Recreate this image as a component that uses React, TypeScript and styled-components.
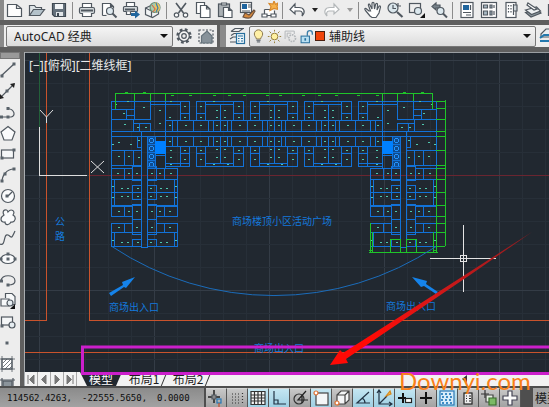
import React from "react";
import styled, { createGlobalStyle, css } from "styled-components";

const GlobalStyle = createGlobalStyle`
  *, *::before, *::after { box-sizing: border-box; }
  body {
    margin: 0;
    background: #5f5f5f;
    font-family: "Noto Sans", "Noto Sans CJK SC", sans-serif;
    font-size: 12px;
    color: #1c1c1c;
  }
  button, select { font: inherit; color: inherit; margin: 0; padding: 0; border: 0; background: none; }
`;

/* ---------- layout ---------- */

const Window = styled.div`
  position: relative;
  display: flex;
  flex-direction: column;
  height: 100vh;
  overflow: hidden;
  background: #5f5f5f;
`;

const Toolbar = styled.div`
  display: flex;
  align-items: center;
  flex: none;
  height: 20px;
  overflow: hidden;
  background: #ededed;
`;

const ToolbarRow = styled.div`
  display: flex;
  gap: 3px;
  flex: none;
  height: 22px;
  margin: 5px 0 5px;
  overflow: hidden;
`;

const Group = styled.div<{ $grow?: boolean }>`
  display: flex;
  align-items: center;
  flex: ${(p) => (p.$grow ? "1 0 auto" : "none")};
  background: #ededed;
`;

const Grip = styled.span<{ $wide?: boolean }>`
  flex: none;
  align-self: stretch;
  width: ${(p) => (p.$wide ? 6 : 4)}px;
  background: radial-gradient(circle, #8a8a8a 0 1px, transparent 1px) 0 0 / 2px 2px, #4a4a4a;
`;

const Divider = styled.span`
  flex: none;
  width: 1px;
  height: 17px;
  margin: 0 3px 0 2px;
  background: #8c8c8c;
`;

const ToolButton = styled.button<{ $narrow?: boolean }>`
  display: grid;
  place-items: center;
  flex: none;
  width: ${(p) => (p.$narrow ? 13 : 22)}px;
  height: 20px;
`;

const Combo = styled.label<{ $width: number; $lead?: boolean }>`
  position: relative;
  display: flex;
  align-items: center;
  flex: none;
  width: ${(p) => p.$width}px;
  height: 21px;
  margin-left: ${(p) => (p.$lead ? 2 : 1)}px;
  padding-left: ${(p) => (p.$lead ? 7 : 1)}px;
  border: 1px solid #777;
  border-radius: 2px;
  background: linear-gradient(#f5f5f5, #dcdcdc);
`;

const ComboSelect = styled.select`
  flex: 1;
  min-width: 0;
  height: 100%;
  appearance: none;
  outline: none;
`;

const ComboArrow = styled.span`
  flex: none;
  margin-right: 4px;
  border: 4px solid transparent;
  border-top-color: #111;
  border-bottom: 0;
`;

const LayerMarks = styled.span`
  display: flex;
  align-items: center;
  flex: none;
  gap: 1px;
  margin-right: 4px;

  svg { width: 15px; height: 15px; }
`;

const Swatch = styled.span`
  width: 10px;
  height: 10px;
  background: #f0440a;
  border: 1px solid #4a2010;
`;

const Workspace = styled.div`
  display: flex;
  flex: 1;
  min-height: 0;
`;

const DrawBar = styled.div`
  display: flex;
  flex-direction: column;
  flex: none;
  width: 20px;
  margin-right: 4px;
  overflow: hidden;
  background: #ededed;
`;

const DrawGrip = styled.span`
  flex: none;
  height: 7px;
  border: 1px solid #777;
  background: radial-gradient(circle, #9a9a9a 0 1px, transparent 1px) 0 0 / 2px 2px, #444;
`;

const DrawButton = styled.button`
  display: grid;
  place-items: center start;
  flex: none;
  width: 20px;
  height: 21px;
`;

const Document = styled.main`
  position: relative;
  display: flex;
  flex-direction: column;
  flex: 1;
  min-width: 0;
  border-left: 1px solid #a9adb0;
`;

const Canvas = styled.div`
  flex: 1;
  min-height: 0;
  overflow: hidden;
  background: #212830;
  border-top: 1px solid #9a9ea2;

  svg { display: block; }
`;

const MarkupLayer = styled.svg`
  position: absolute;
  left: 0;
  top: 0;
  overflow: visible;
  pointer-events: none;
`;

const TabStrip = styled.nav`
  display: flex;
  flex: none;
  height: 14px;
  background: #f2f2f2;
`;

const NavButton = styled.button`
  display: grid;
  place-items: center;
  width: 13px;
  height: 14px;
  border-right: 1px solid #a8a8a8;
`;

const ScrollButton = styled.button`
  display: grid;
  place-items: center;
  width: 16px;
  height: 14px;
  margin: 0 76px 0 auto;
`;

const Tab = styled.button<{ $active?: boolean }>`
  position: relative;
  width: ${(p) => (p.$active ? 42 : 44)}px;
  height: 14px;
  margin-left: ${(p) => (p.$active ? 3 : 0)}px;
  font-family: "Noto Sans CJK SC", sans-serif;
  font-size: 12px;
  line-height: 14px;
  text-align: center;
  z-index: 0;
  ${(p) =>
    p.$active
      ? css`
          color: #fff;
          &::before {
            content: "";
            position: absolute;
            inset: 0;
            z-index: -1;
            background: #212830;
            clip-path: polygon(0 0, 100% 0, 36px 100%, 7px 100%);
          }
        `
      : css`
          &::after {
            content: "";
            position: absolute;
            right: 2px;
            top: 3px;
            width: 1px;
            height: 11px;
            background: #333;
            transform: skewX(-22deg);
          }
        `}
`;

const StatusBar = styled.footer`
  display: flex;
  align-items: stretch;
  flex: none;
  height: 21px;
  padding-top: 2px;
  background: #4e4e4e;
`;

const Coordinates = styled.div`
  display: flex;
  align-items: center;
  gap: 10px;
  flex: none;
  width: 204px;
  margin-right: 2px;
  padding-left: 7px;
  font-family: "DejaVu Sans Mono", monospace;
  font-size: 9px;
  color: #0c0c0c;
  background: linear-gradient(#8b8b8b, #a2a2a2);
`;

const Toggle = styled.button<{ $on?: boolean }>`
  display: grid;
  place-items: center;
  flex: none;
  width: 21px;
  border-right: 1px solid #555;
  border-top: 1px solid #d5d5d5;
  background: ${(p) =>
    p.$on ? "linear-gradient(#c4e6f2, #9fcfe2)" : "linear-gradient(#c8c8c8, #a2a2a2)"};
`;

const SpaceButton = styled.button`
  flex: 1;
  min-width: 0;
  margin-left: 12px;
  padding-left: 2px;
  overflow: hidden;
  text-align: left;
  white-space: nowrap;
  background: #a6a6a6;
`;

const Watermark = styled.div`
  position: absolute;
  left: 399px;
  bottom: 12px;
  font-family: Lato, sans-serif;
  font-size: 24px;
  line-height: 28px;
  color: #fa8018;
  pointer-events: none;
`;

/* ---------- icons ---------- */

const Icon = ({ children }: { children: React.ReactNode }) => (
  <svg width="18" height="18" viewBox="0 0 18 18" fill="none" stroke="#505860" strokeWidth="1.2" aria-hidden="true">
    {children}
  </svg>
);

const down = <path d="M2 7h6l-3 4z" fill="#222" stroke="none" />;

const icons: Record<string, React.ReactNode> = {
  new: <path d="M1.5 3.5h9l5 4v8h-14z M10.5 3.5v4h5" fill="#fdfdfd" />,
  open: (
    <>
      <path d="M1.500 14.500V4.500h5l1.500 2h5.500v3" fill="#dfe5e8" />
      <path d="M1.500 14.500l4-6h11l-4.500 6z" fill="#b4c2ca" />
    </>
  ),
  save: (
    <>
      <path d="M2.500 2.500h13v13h-11l-2-2z" fill="#65717c" stroke="#3f4952" />
      <path d="M5 3h8v5H5z" fill="#f1f4f6" stroke="none" />
      <path d="M6 11h7v4H6z" fill="#e0e5e8" stroke="none" />
      <path d="M7 12h2v3H7z" fill="#3f4952" stroke="none" />
    </>
  ),
  print: (
    <>
      <path d="M4.500 7V2.500h9V7" fill="#fff" />
      <rect x="1.500" y="6.500" width="15" height="6" rx="1.500" fill="#d4d9dc" />
      <path d="M3 9.500h12" strokeWidth="2" />
      <path d="M4.500 12v3.500h9V12" fill="#fff" />
    </>
  ),
  preview: (
    <>
      <path d="M2.500 14.500v-12h8l3 3v2 M10.500 2.500v3h3 M2.500 14.500h4" fill="#fff" />
      <circle cx="10" cy="10" r="3.500" fill="#dfeaf0" />
      <path d="M12.500 12.500l4 4" strokeWidth="2" />
    </>
  ),
  publish: (
    <>
      <path d="M4.500 6V1.500h8V6" fill="#fff" />
      <rect x="1.500" y="5.500" width="14" height="5" rx="1" fill="#d4d9dc" />
      <path d="M3 8.500h10" strokeWidth="2" />
      <path d="M4.500 10.500v3h4v-3" fill="#fff" />
      <path d="M9 12h4V9.500l5 4-5 4V15H9z" fill="#20659d" stroke="none" />
    </>
  ),
  globe: (
    <>
      <path d="M1.500 7l7-3 6 3v6l-6 3.500-7-3z" fill="#f1f3f4" />
      <path d="M1.500 7l6 3v6" />
      <circle cx="11" cy="6.500" r="5" fill="#a5cfae" stroke="#6b8b78" />
      <path d="M11 1.500v10a5 5 0 0 0 0-10z" fill="#edc45c" stroke="none" />
      <path d="M8 4l3 4-2 3" stroke="#d76c48" />
      <path d="M12 2l2 5-2 4" stroke="#387fb0" />
    </>
  ),
  cut: (
    <>
      <path d="M4 2l7.500 10 M14 2L6.500 12" strokeWidth="1.600" />
      <circle cx="4.500" cy="14" r="2.200" fill="#fff" />
      <circle cx="13.500" cy="14" r="2.200" fill="#fff" />
    </>
  ),
  copy: (
    <>
      <path d="M2.500 12.500v-11h8v11z" fill="#fff" />
      <path d="M6.500 4.500h6l3.500 3.500v8.500H6.500z M12.500 4.500V8H16" fill="#fff" />
    </>
  ),
  paste: (
    <>
      <rect x="2.500" y="3" width="11" height="12.500" fill="#aab0b4" />
      <path d="M5.500 4V2h5v2z" fill="#e9ecee" />
      <path d="M7.500 6.500h5l3.500 3v7H7.500z M12.500 6.500v3H16" fill="#fff" />
    </>
  ),
  match: (
    <>
      <rect x="2.500" y="1.500" width="11" height="10" fill="#fff" />
      <path d="M4 3h5v5H4z" fill="#1f649e" stroke="none" />
      <path d="M10 4h3 M10 6h3 M4 10h8" />
      <path d="M16 9l-5 5-4-2-2 4c5 2 8 1 9-1l3-5z" fill="#d7893c" stroke="#6a5140" />
    </>
  ),
  block: (
    <>
      <path d="M4.500 8.500v6h10v-5 M4.500 8.500h6" fill="#fff" />
      <path d="M2 13h5v3H2z M11 13h5v3h-5z" fill="#fff" />
      <path d="M14 0l1.500 3.500L18 2l-1 3.500 1 3-4-1-4 2 1-4-2-3 4 .5z" fill="#f7b24b" stroke="#d8892c" />
    </>
  ),
  undo: <path d="M7 3L2 8.500 7 13v-3h5c2 0 3 2 2 5 4-4 2-8.500-3-8.500H7z" fill="#fff" />,
  redo: <path d="M11 3l5 5.500-5 4.500v-3H6c-2 0-3 2-2 5-4-4-2-8.500 3-8.500h4z" fill="#fff" stroke="#b4b8ba" />,
  hand: (
    <path
      d="M5 10L2 7.500c-1.500-.5-1.500 1-.5 2L6 15l2 1.500h4L15 12l1.500-6c0-1.500-1.500-1.500-2 0L13 9l.5-5.500c0-1.500-1.500-1.500-2 0L10.500 8 10 2.500c0-1.500-2-1.500-2 0V8L6 4C5.500 2.500 4 3 4.500 4.500L6.500 10z"
      fill="#fff"
    />
  ),
  zoom: (
    <>
      <circle cx="7" cy="7" r="5" fill="#dae6ec" />
      <path d="M11 11l5.500 5" strokeWidth="2.200" />
      <path d="M7 4v3.500h3 M12 2v3h3" />
    </>
  ),
  zoomWindow: (
    <>
      <rect x="1.500" y="2.500" width="11" height="9" />
      <circle cx="10" cy="10" r="3.500" fill="#dce8ee" />
      <path d="M17 12v5h-5z" fill="#111" stroke="none" />
    </>
  ),
  zoomPrev: (
    <>
      <path d="M6 2L2 5.500 6 9V7h4V4H6z" fill="#78838b" />
      <circle cx="10.500" cy="10" r="3.500" fill="#dce8ee" />
      <path d="M13 12.500l4 4" strokeWidth="2" />
    </>
  ),
  props: (
    <>
      <rect x="3" y="1.500" width="12" height="15" fill="#fff" />
      <path d="M5 4h6v5H5z" fill="#20659d" stroke="none" />
      <path d="M12.500 4v5 M5 11.500h8 M8 14h5" />
    </>
  ),
  design: (
    <>
      <rect x="1.500" y="1.500" width="15" height="15" fill="#fff" />
      <path d="M3.500 4h4v3h-4z M3.500 10h4v4h-4z M10 4h2v3h-2z M14 4v3 M10 10h2v4h-2z M14 10v4" fill="#a9bac5" />
    </>
  ),
  palettes: (
    <>
      <rect x="4" y="1.500" width="10" height="15" fill="#fff" />
      <path d="M6.500 4v1.500 M9 4v1.500 M6.500 7v1.500 M9 7v1.500 M6.500 10v1.500 M9 10v1.500 M11.500 3v11" />
      <path d="M12 4h3v6h-3" fill="#cdd4d8" />
    </>
  ),
  sheets: (
    <>
      <path d="M1.500 11.500L13 8l4 4-10 4z" fill="#8d999f" />
      <path d="M1.500 9l11-3 4 4-9 3.500z" fill="#eef1f3" />
      <path d="M4 2l9 6-3 1-7-5z" fill="#fff" />
    </>
  ),
  markup: <path d="M2.500 3.500h12v11h-12z M5 6h6 M5 9h6" fill="#fff" />,
  gear: (
    <>
      <circle cx="9" cy="9" r="6.200" strokeWidth="3" strokeDasharray="2.600 2.270" />
      <circle cx="9" cy="9" r="5.300" fill="#f6f6f6" />
      <circle cx="9" cy="9" r="2.300" fill="#ededed" />
    </>
  ),
  workspace: (
    <>
      <rect x="2" y="3" width="14" height="13" strokeDasharray="2 1.500" />
      <path d="M4.500 16V9L10 4l5 5v7z" fill="#87929a" stroke="#65727b" />
    </>
  ),
  layers: (
    <>
      <path d="M3 4.500l4-3h9 M3 8.500l3-2h5 M2 12l3-2h3 M3 4.500h8l4-3 M2 15h6" />
      <rect x="8.500" y="6.500" width="8" height="10" fill="#eef6fa" stroke="#276f9d" />
      <path d="M10 9h5 M10 11.500h1.500 M13 11.500h2 M10 14h1.500 M13 14h2" stroke="#276f9d" />
    </>
  ),
  layerMore: (
    <>
      <path d="M3 7l5-5h9v4l-4 4H3z" fill="#e9eef1" />
      <path d="M2 11l4-3h11 M2 14h14" stroke="#2478ad" strokeWidth="2" />
    </>
  ),
  bulb: (
    <>
      <path d="M6.500 12c0-2-2.500-3-2.500-6a5 5 0 0 1 10 0c0 3-2.500 4-2.500 6z" fill="#fff0a6" stroke="#8c7950" />
      <path d="M6.500 13.500h5 M7 15.500h4" />
    </>
  ),
  sun: (
    <>
      <circle cx="9" cy="9" r="4" fill="#fff1a0" stroke="#9a8440" />
      <path d="M9 1v2 M9 15v2 M1 9h2 M15 9h2 M3 3l2 2 M13 13l2 2 M3 15l2-2 M13 5l2-2" stroke="#9a8440" />
    </>
  ),
  freeze: (
    <>
      <path d="M2.500 12V2.500h11V6 M5 10V5h5" stroke="#b3b7ba" />
      <circle cx="11" cy="11" r="4" stroke="#b3b7ba" strokeWidth="2" strokeDasharray="2 1" />
    </>
  ),
  lock: (
    <>
      <path d="M10 8V5a3 3 0 0 1 6 0v2" stroke="#3c7fa9" strokeWidth="1.600" />
      <rect x="2.500" y="8.500" width="10" height="8" fill="#b9e0f2" stroke="#276f9d" />
      <path d="M7.500 11v3" stroke="#276f9d" strokeWidth="2" />
    </>
  ),
};

const Node = ({ at }: { at: [number, number][] }) => (
  <>
    {at.map(([x, y], i) => (
      <rect key={i} x={x - 1.5} y={y - 1.5} width="3" height="3" fill="#59626a" stroke="none" />
    ))}
  </>
);

const drawTools: [string, React.ReactNode][] = [
  ["直线", <><path d="M1 15L14 3" /><Node at={[[2, 15], [14, 3]]} /></>],
  ["构造线", <><path d="M0 16L14 2" /><path d="M15 1l-5 1 4 4z M0 17l0-5 4 4z" fill="#222" stroke="none" /><Node at={[[7, 9]]} /></>],
  ["多段线", <><path d="M1 14h10c5-1 4-8-4-8.500" /><Node at={[[1.5, 14], [8, 14], [8, 5.5]]} /></>],
  ["多边形", <path d="M8 2.500l7 5.500-3 8H4L1 8z" fill="#fafbfc" />],
  ["矩形", <><rect x="1.500" y="5" width="12" height="8" fill="#f5f7f8" /><Node at={[[14, 5], [2, 13]]} /></>],
  ["圆弧", <><path d="M2 16C2 9 7 3 14 3" /><Node at={[[2, 15], [5, 8], [14, 3]]} /></>],
  ["圆", <><circle cx="8" cy="9" r="6.500" fill="#fafbfc" /><path d="M8 9l4-4" /><Node at={[[7, 9]]} /></>],
  ["修订云线", <path d="M4 7C1 2 7 0 8 4c3-4 8-1 5 3 4 2 2 8-2 7-2 4-6 3-6 0-4 1-6-4-1-7z" fill="#fafbfc" />],
  ["样条曲线", <path d="M0 15c6 3 3-11 8-9 4 2 3 5 7-4" />],
  ["椭圆", <><ellipse cx="8" cy="9" rx="7" ry="4.500" fill="#fafbfc" /><Node at={[[8, 9], [1, 9], [15, 9], [8, 4]]} /></>],
  ["椭圆弧", <><path d="M1 10c0-7 14-7 14 0 0 3-3 4-7 4" /><Node at={[[1.5, 10], [8, 14]]} /></>],
  ["插入块", <><path d="M5.500 6V1.500H12l3 3v8H9 M1 7h8v7H1z" fill="#f7f9fa" /><circle cx="10" cy="11" r="3" fill="#e6edf1" /><path d="M15 12v5h-5z" fill="#111" stroke="none" /></>],
  ["创建块", <><rect x="1.500" y="4" width="11" height="8" fill="#f5f7f8" /><circle cx="12" cy="12" r="3" fill="#e6edf1" /><Node at={[[2, 13]]} /></>],
  ["点", <Node at={[[7, 9]]} />],
  ["图案填充", <><rect x="2" y="4" width="10" height="10" fill="#fff" /><path d="M0 4h15 M0 14h15 M2 1v16 M12 1v16 M3 8l4-4 M3 12l8-8 M5 14l7-7 M9 14l3-3" strokeWidth="0.800" /></>],
  ["渐变色", <><path d="M0 4h15 M2 2v16 M13 2v16" /><rect x="3" y="5" width="9" height="12" fill="#8b949b" /></>],
];

/* ---------- drawing ---------- */

type Box = [number, number, number, number];

const trace = (boxes: Box[], dx = 0) =>
  boxes
    .map(([l, t, r, b]) => {
      const x1 = l + dx + 0.5;
      const x2 = r + dx + 0.5;
      return `M${x1} ${t + 0.5}H${x2}V${b + 0.5}H${x1}Z`;
    })
    .join("");

const unit: Box[] = [
  [0, 101, 9, 113], [0, 113, 9, 120], [37, 101, 47, 113], [37, 113, 47, 120],
  [0, 101, 47, 101], [9, 104, 37, 120], [24, 104, 24, 120],
  [17, 120, 24, 131], [24, 120, 31, 131], [-19, 120, -3, 131], [-3, 120, 12, 131],
  [17, 136, 24, 146], [24, 136, 31, 146], [-19, 136, -3, 146], [-3, 136, 12, 146],
  [0, 146, 9, 153], [0, 153, 9, 166], [37, 146, 47, 153], [37, 153, 47, 166],
  [9, 163, 37, 166], [24, 146, 24, 163], [9, 146, 37, 163],
];

const unitDots: [number, number][] = [
  [4, 106], [4, 117], [20, 110], [28, 110], [20, 117], [28, 117], [42, 106], [42, 117],
  [20, 125], [28, 125], [-11, 125], [4, 125], [-11, 141], [4, 141], [20, 141], [28, 141],
  [20, 149], [28, 149], [4, 150], [42, 150], [4, 159], [42, 159], [20, 157], [28, 157],
  [17, 101], [31, 164], [17, 164],
];

const corner: Box[] = [
  [111, 101, 189, 101], [111, 101, 134, 109], [111, 109, 126, 119], [126, 115, 134, 119],
  [134, 101, 150, 119], [111, 119, 133, 131], [133, 123, 139, 131], [139, 123, 150, 131],
  [150, 104, 165, 104], [165, 101, 165, 168], [180, 101, 189, 113], [180, 113, 189, 120],
  [165, 104, 180, 120], [165, 120, 172, 131], [165, 136, 172, 146], [180, 146, 189, 153],
  [180, 153, 189, 166], [165, 146, 180, 163], [165, 163, 189, 166],
  [111, 136, 141, 150], [137, 136, 141, 147], [111, 150, 124, 165], [124, 150, 133, 165],
  [133, 150, 141, 165], [111, 131, 111, 168], [147, 136, 155, 144], [147, 144, 155, 152],
  [147, 152, 155, 160], [147, 160, 155, 168], [155, 155, 165, 155],
];

const wing: Box[] = [
  [111, 168, 124, 179], [124, 168, 132, 179], [132, 166, 141, 180],
  [111, 179, 114, 192], [111, 192, 114, 205], [114, 179, 141, 192], [114, 192, 141, 205],
  [132, 185, 141, 192], [132, 192, 141, 199],
  [111, 206, 124, 216], [124, 206, 132, 216], [132, 204, 141, 219], [132, 219, 141, 234],
  [111, 223, 124, 232], [124, 223, 132, 232], [111, 232, 114, 246], [114, 232, 141, 246],
  [132, 239, 141, 246],
];

const cornerDots: [number, number][] = [
  [115, 104], [123, 113], [143, 107], [159, 110], [159, 123], [124, 124], [137, 127], [145, 127],
  [118, 142], [130, 144], [138, 140], [118, 156], [128, 156], [138, 157], [112, 144], [127, 101],
  [169, 117], [169, 125], [169, 141], [170, 150], [170, 157], [170, 164], [170, 101], [184, 106],
  [184, 117], [184, 150], [184, 159],
];

const wingDots: [number, number][] = [
  [117, 173], [128, 173], [136, 173], [121, 188], [127, 188], [137, 188], [121, 196], [127, 196], [137, 196],
  [118, 211], [128, 211], [136, 211], [118, 227], [136, 227], [121, 242], [127, 242], [137, 242],
  [112, 186], [112, 197], [112, 240],
];

const Dots = ({ at, dx = 0 }: { at: [number, number][]; dx?: number }) => (
  <path d={at.map(([x, y]) => `M${x + dx} ${y + 0.5}h2`).join("")} stroke="#4fc7ae" />
);

const HalfPlan = () => (
  <>
    <path d={trace(corner)} />
    <path d="M141.500 131V247H147.500V136" />
    <path d={trace(wing)} />
    <rect x="155" y="141" width="11" height="13" fill="#0080ff" stroke="none" />
    {[140, 148, 156, 164].map((y) => (
      <g key={y}>
        <rect x="148" y={y - 3} width="7" height="7" fill="#0f4c90" stroke="none" />
        <circle cx="151.500" cy={y + 0.5} r="2" stroke="#2394ff" />
      </g>
    ))}
    <Dots at={cornerDots} />
    <Dots at={wingDots} />
    <g transform="translate(289 0) scale(-1 1)">
      <path d={trace(wing)} />
      <Dots at={wingDots} />
    </g>
  </>
);

const greenRungs = [101, 108, 119, 131, 136, 150, 165, 168, 179, 192, 205, 216, 223, 232, 246];
const minorX = Array.from({ length: 23 }, (_, i) => 39.5 + i * 23);
const minorY = Array.from({ length: 14 }, (_, i) => 60.5 + i * 23);

const SiteLabel = styled.text`
  font-family: "Noto Sans CJK SC", sans-serif;
  font-size: 10px;
  fill: #1479dc;
  stroke: none;
`;

const ViewLabel = styled.text`
  font-family: "Noto Sans", "Noto Sans CJK SC", sans-serif;
  font-size: 12px;
  fill: #e8e8e8;
`;

const Plan = () => (
  <svg width="524" height="320" viewBox="25 53 524 320" fill="none" role="img" aria-label="平面图">
    <g shapeRendering="crispEdges">
      {minorX.map((x, i) => (
        <path key={x} d={`M${x} 52V374`} stroke={i % 5 === 0 ? "#343c46" : "#272f38"} />
      ))}
      {minorY.map((y, i) => (
        <path key={y} d={`M25 ${y}H549`} stroke={i % 5 === 0 ? "#343c46" : "#272f38"} />
      ))}
      <path d="M90 175.500H549" stroke="#6a2530" />
      <path d="M39.500 52V127" stroke="#23603a" />
      <path d="M46.500 52V320.500H25 M549 320.500H89.500V52 M25 352.500H549" stroke="#c9532c" />
      <g stroke="#1272d8">
        <path d="M111 131.500H437 M111 136.500H437" />
        <HalfPlan />
        <g transform="translate(548 0) scale(-1 1)">
          <HalfPlan />
        </g>
        {[196, 250, 304].map((x) => (
          <React.Fragment key={x}>
            <path d={trace(unit, x)} />
            <Dots at={unitDots} dx={x} />
          </React.Fragment>
        ))}
        <path d={trace([[339, 120, 355, 131], [355, 120, 370, 131], [339, 136, 355, 146], [355, 136, 370, 146]])} />
        <Dots at={[[347, 125], [362, 125], [347, 141], [362, 141]]} />
      </g>
      <g stroke="#1fc42a">
        <path d="M115.500 109V93.500H432.500V109 M134.500 93V101 M150.500 93V101 M165.500 93V101 M382.500 93V101 M397.500 93V101 M413.500 93V101" />
        <path d="M125 92.500h3 M143 92.500h3 M171 95.500h3 M189 95.500h3 M213 95.500h3 M228 95.500h3 M243 95.500h3 M266 95.500h3 M279 95.500h3 M302 95.500h3 M318 95.500h3 M335 95.500h3 M357 95.500h3 M376 95.500h3 M403 92.500h3 M421 92.500h3" />
        <path d="M445.500 100V246 M436.500 168V252" />
        <path d={greenRungs.map((y) => `M436 ${y + 0.5}h9`).join("")} />
        <path d="M370.500 223V252 M372.500 232V252 M390.500 252V239.500H400.500V252 M406.500 252V239.500H416.500V252 M433.500 232V252 M369 252.500H438 M369 250.500H373 M433 250.500H437" />
      </g>
    </g>
    <path d="M112 246.500A292 292 0 0 0 436 246.500" stroke="#1b6cba" />
    <path d="M109 293l14-8-1-3 13-5-9 11-2-1-13 9z" fill="#1583ea" />
    <path d="M438 292l-12-8 1-3-15-4 9 10 3-1 12 8z" fill="#1583ea" />
    <g textAnchor="middle">
      <SiteLabel x="60" y="225">公</SiteLabel>
      <SiteLabel x="60" y="240">路</SiteLabel>
      <SiteLabel x="282" y="225">商场楼顶小区活动广场</SiteLabel>
      <SiteLabel x="134" y="311">商场出入口</SiteLabel>
      <SiteLabel x="411" y="310">商场出入口</SiteLabel>
      <SiteLabel x="279" y="352">商场出入口</SiteLabel>
    </g>
    <path d="M39.500 127V175.500H87" stroke="#dedede" shapeRendering="crispEdges" />
    <path d="M40 110l6.500 7 6.500-7 M46.500 117v6 M91 161l13 12 M104 161l-13 12" stroke="#dedede" />
    <ViewLabel x="29" y="70">[−][俯视][二维线框]</ViewLabel>
    <g stroke="#e4e4e4" shapeRendering="crispEdges">
      <path d="M463.500 225V292 M430 258.500H496" />
      <rect x="460.500" y="255.500" width="6" height="6" />
    </g>
  </svg>
);

const Markup = () => (
  <MarkupLayer width="524" height="335" viewBox="25 52 524 335" fill="none" aria-hidden="true">
    <defs>
      <linearGradient id="pointer" x1="1" y1="0" x2="0" y2="1">
        <stop offset="0" stopColor="#8c1c20" />
        <stop offset="0.500" stopColor="#d81818" />
        <stop offset="0.800" stopColor="#ff0a05" />
      </linearGradient>
    </defs>
    <path d="M560 347H82.500V373.500H560" stroke="#cb1fcb" strokeWidth="3" />
    <path d="M532 232L343 353 340 350 330 365 348 363 346 359 470 275z" fill="url(#pointer)" />
  </MarkupLayer>
);

/* ---------- toolbars ---------- */

type Tool = [string, string] | null;

const fileTools: Tool[] = [
  ["新建", "new"], ["打开", "open"], ["保存", "save"], null,
  ["打印", "print"], ["打印预览", "preview"], ["发布", "publish"], ["三维打印", "globe"], null,
  ["剪切", "cut"], ["复制", "copy"], ["粘贴", "paste"], ["特性匹配", "match"], ["块编辑器", "block"], null,
];

const viewTools: Tool[] = [
  null, ["平移", "hand"], ["实时缩放", "zoom"], ["窗口缩放", "zoomWindow"], ["缩放上一个", "zoomPrev"], null,
  ["特性", "props"], ["设计中心", "design"], ["工具选项板", "palettes"], ["图纸集", "sheets"], ["标记集", "markup"],
];

const Tools = ({ list }: { list: Tool[] }) => (
  <>
    {list.map((tool, i) =>
      tool ? (
        <ToolButton key={i} aria-label={tool[0]}>
          <Icon>{icons[tool[1]]}</Icon>
        </ToolButton>
      ) : (
        <Divider key={i} />
      )
    )}
  </>
);

const SmallArrow = ({ label, dim }: { label: string; dim?: boolean }) => (
  <ToolButton $narrow aria-label={label}>
    <svg width="10" height="18" opacity={dim ? 0.4 : 1}>{down}</svg>
  </ToolButton>
);

const toggles: [string, boolean, React.ReactNode][] = [
  ["推断约束", false, <><path d="M7 1v13 M1 8h12" stroke="#222" strokeWidth="1.500" /><path d="M5 6h4v4H5z" fill="#888" /><rect x="10" y="10" width="4" height="4" stroke="#2777b5" /><path d="M12 14v4" stroke="#c0502c" /></>],
  ["捕捉模式", false, <path d="M4 5h9 M4 8h9 M4 11h9 M4 14h9 M14.500 4v11" stroke="#333" strokeDasharray="1 2" />],
  ["栅格显示", true, <path d="M2 2.500h14v13H2z M2 6h14 M2 9h14 M2 12h14 M5.500 2v13 M9 2v13 M12.500 2v13" stroke="#333" fill="#f4f4f4" />],
  ["正交模式", true, <path d="M4 2v13h12 M4 11h4v4" stroke="#234" />],
  ["极轴追踪", false, <><circle cx="8" cy="10" r="5" stroke="#333" /><path d="M15 2L7 11h10 M11 6v8" stroke="#222" /></>],
  ["对象捕捉", true, <><rect x="4" y="4" width="12" height="12" fill="#f4f6f7" stroke="#444" /><circle cx="4" cy="4" r="2" fill="#fff" stroke="#e07030" /></>],
  ["三维对象捕捉", false, <><path d="M4 6l4-4h8v9l-4 4H4z M4 6h8v9 M12 6l4-4" fill="#f4f6f7" stroke="#444" /><circle cx="4" cy="14" r="2" fill="#fff" stroke="#e07030" /></>],
  ["对象捕捉追踪", true, <path d="M15 3L3 14h13 M8 9c2 1 3 3 3 5" stroke="#234" />],
  ["动态 UCS", true, <><path d="M4 2v13h12 M4 15L12 7 M2 4l2-3 2 3 M14 13l3 2-3 2" stroke="#234" /><path d="M15 2l-4 5 5-2z" fill="#f4b63c" stroke="#d48920" /></>],
  ["动态输入", true, <><path d="M7 4v10 M2 9h8" stroke="#111" strokeWidth="2" /><rect x="9.500" y="9.500" width="6" height="4" fill="#fff" stroke="#222" /></>],
  ["线宽", false, <path d="M9 3v12 M3 9h12" stroke="#111" strokeWidth="2" />],
  ["透明度", true, <><rect x="2" y="2" width="14" height="14" fill="#d6ecfa" stroke="#2b78b4" /><path d="M3 5h12 M4 8h12 M3 11h12 M4 14h12" stroke="#3e8cc5" strokeWidth="2" strokeDasharray="2 2" /></>],
  ["快捷特性", false, <><rect x="5" y="4" width="8" height="11" fill="#eee" stroke="#222" /><path d="M7 7h1 M10 7h2 M7 9.500h1 M10 9.500h2 M7 12h1 M10 12h2" stroke="#222" /></>],
  ["选择循环", false, <><path d="M5 1v8 M1 5h8" stroke="#333" /><path d="M6 6h7v7H6z" fill="#e6efe3" stroke="#444" /><path d="M9 9h7v7H9z" fill="#7bb965" stroke="#3b6e2c" /></>],
  ["注释监视器", false, <path d="M7 2h4v5h5v4h-5v5H7v-5H2V7h5z" fill="#fafafa" stroke="#445" />],
];

const pagers: [string, string][] = [
  ["第一个布局", "M3 2v9 M9 2L4.500 6.500 9 11z"],
  ["上一个布局", "M8 2L3.500 6.500 8 11z"],
  ["下一个布局", "M4 2l4.500 4.500L4 11z"],
  ["最后一个布局", "M9 2v9 M3 2l4.500 4.500L3 11z"],
];

export default function App() {
  return (
    <Window>
      <GlobalStyle />
      <Toolbar>
        <Grip />
        <Tools list={fileTools} />
        <ToolButton aria-label="放弃"><Icon>{icons.undo}</Icon></ToolButton>
        <SmallArrow label="放弃列表" />
        <ToolButton aria-label="重做"><Icon>{icons.redo}</Icon></ToolButton>
        <SmallArrow label="重做列表" dim />
        <Tools list={viewTools} />
      </Toolbar>
      <ToolbarRow>
        <Group>
          <Grip />
          <Combo $width={167} $lead>
            <ComboSelect aria-label="工作空间">
              <option>AutoCAD 经典</option>
            </ComboSelect>
            <ComboArrow />
          </Combo>
          <Tools list={[["工作空间设置", "gear"], ["我的工作空间", "workspace"]]} />
        </Group>
        <Group $grow>
          <Grip $wide />
          <Tools list={[["图层特性", "layers"]]} />
          <Combo $width={287}>
            <LayerMarks>
              {["bulb", "sun", "freeze", "lock"].map((name) => (
                <Icon key={name}>{icons[name]}</Icon>
              ))}
              <Swatch />
            </LayerMarks>
            <ComboSelect aria-label="图层">
              <option>辅助线</option>
            </ComboSelect>
            <ComboArrow />
          </Combo>
          <Tools list={[["置为当前图层", "layerMore"]]} />
        </Group>
      </ToolbarRow>
      <Workspace>
        <DrawBar>
          <DrawGrip />
          {drawTools.map(([name, art]) => (
            <DrawButton key={name} aria-label={name}>
              <Icon>{art}</Icon>
            </DrawButton>
          ))}
        </DrawBar>
        <Document>
          <Canvas>
            <Plan />
          </Canvas>
          <TabStrip>
            {pagers.map(([name, d]) => (
              <NavButton key={name} aria-label={name}>
                <svg width="12" height="13" fill="#777" stroke="#777"><path d={d} /></svg>
              </NavButton>
            ))}
            <Tab $active>模型</Tab>
            <Tab>布局1</Tab>
            <Tab>布局2</Tab>
            <ScrollButton aria-label="向左滚动">
              <svg width="8" height="8"><path d="M6 0v8L1 4z" fill="#333" /></svg>
            </ScrollButton>
          </TabStrip>
          <Markup />
        </Document>
      </Workspace>
      <StatusBar>
        <Coordinates>
          <span>114562.4263,</span>
          <span>-22555.5650,</span>
          <span>0.0000</span>
        </Coordinates>
        {toggles.map(([name, on, art]) => (
          <Toggle key={name} $on={on} aria-label={name} aria-pressed={on}>
            <Icon>{art}</Icon>
          </Toggle>
        ))}
        <SpaceButton>模型</SpaceButton>
      </StatusBar>
      <Watermark>Downyi.com</Watermark>
    </Window>
  );
}
